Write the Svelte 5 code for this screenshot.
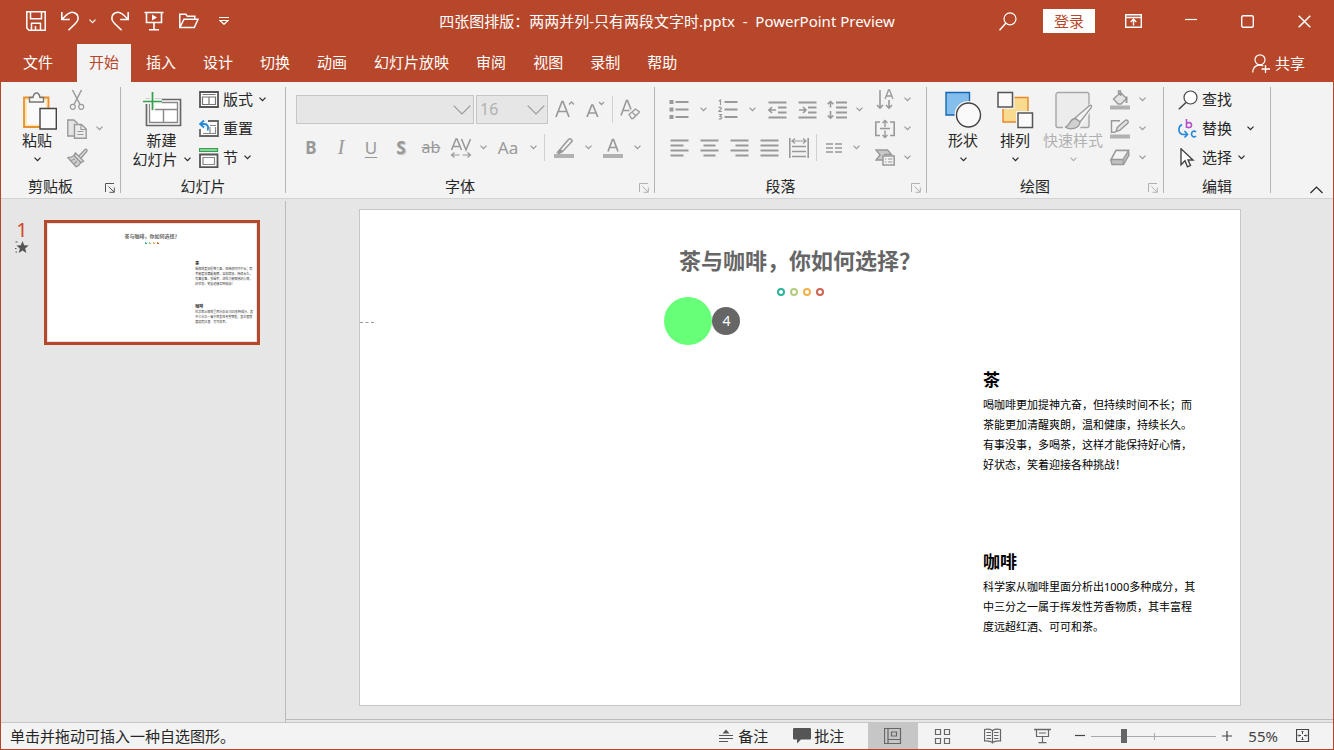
<script lang="ts">
	type Icon = { w: number; h: number; body: string };

	const icons: Record<string, Icon> = {
		chevron: { w: 7, h: 5, body: '<path d="M.5 .7 3.5 3.7 6.5 .7"/>' },
		save: { w: 20, h: 20, body: '<path d="M.8 .8h18.4v18.4H3L.8 17zM4.5 .8v7h11v-7M5.5 19.2v-7h9v7M9.5 19v-4" stroke-width="1.5"/>' },
		undo: { w: 18, h: 20, body: '<path d="M.8 1v7.5h8M1 8.300C5 4 7.500 1.200 11 1.200c3.500 0 6.200 2.600 6.200 6 0 2.500-1.500 4-3 5.500L7.500 19.300" stroke-width="1.600"/>' },
		redo: { w: 18, h: 20, body: '<path d="M17.200 1v7.500h-8M17 8.300C13 4 10.500 1.200 7 1.200c-3.500 0-6.200 2.600-6.200 6 0 2.500 1.500 4 3 5.500l6.800 6.600" stroke-width="1.600"/>' },
		present: { w: 20, h: 20, body: '<path d="M.5 1.500h19M2.500 1.500v10h15v-10M10 11.500v7M5 18.800h10" stroke-width="1.600"/><path d="m8 3.500 5 3-5 3z" fill="currentColor" stroke="none"/>' },
		folder: { w: 20, h: 16, body: '<path d="M.8 14.500V1.200h6l1.500 2h7.500v3M.8 14.500 5 6.200h14l-3.700 8.300z" stroke-width="1.500"/>' },
		customize: { w: 10, h: 8, body: '<path d="M0 .5h10M1 3.500h8L5 7.300z"/>' },
		search: { w: 18, h: 19, body: '<circle cx="11" cy="6.800" r="6"/><path d="M6.700 11.300.5 18.300" stroke-width="1.500"/>' },
		ribbonMode: { w: 17, h: 14, body: '<path d="M.7 .7h15.600v12.600H.7zM.7 3.500h15.600M8.500 11.500v-6M5.700 8l2.800-2.700L11.300 8" stroke-width="1.400"/>' },
		minimize: { w: 12, h: 12, body: '<path d="M0 4.500h12"/>' },
		maximize: { w: 13, h: 13, body: '<rect x=".7" y=".7" width="11.600" height="11.600" rx="1.500" stroke-width="1.400"/>' },
		close: { w: 13, h: 13, body: '<path d="m.7.7 11.600 11.600M12.300.7.7 12.300" stroke-width="1.500"/>' },
		share: { w: 18, h: 19, body: '<circle cx="8" cy="5.800" r="5"/><path d="M.7 18.500c0-4.500 3-7.500 7-7.500 1.500 0 2.500.2 3.500 1M13.500 11v8M9.500 15h8.500" stroke-width="1.300"/>' },
		paste: {
			w: 40, h: 40,
			body: '<path d="M7 6.500h24.500v29.500H7z" fill="#ffe9b8" stroke="#e8912d" stroke-width="1.800"/><path d="M10 9h18.500v24.500H10z" fill="#fafafa" stroke="none"/><path d="M12.500 11V6.500h3.500c.5-2.500 2-4.500 3.500-4.500s3 2 3.500 4.500h3.500V11z" fill="#f8f8f8" stroke="#797774" stroke-width="1.400"/><path d="M23 17.500h16.300v20.500H23z" fill="#fafafa" stroke="#444" stroke-width="1.400"/>'
		},
		cut: { w: 16, h: 22, body: '<path d="M3.500 1 11 15.500M12.500 1 5 15.500" stroke-width="1.500"/><circle cx="3.800" cy="17.800" r="2.500"/><circle cx="12.200" cy="17.800" r="2.500"/>' },
		copy: { w: 20, h: 20, body: '<path d="M7.500 17H.8V1h6l4 3.500" fill="#e4e4e4" stroke-width="1.400"/><path d="M7.500 5.500h7l4.700 4.500v9.200H7.500z" fill="#ececec" stroke-width="1.400"/><path d="M14 5.500v5h5M10.500 12.500h6M10.500 15.500h6"/>' },
		brush: { w: 21, h: 20, body: '<path d="M7 7.500C5 9 3 9.500.8 9.700L9 18.800c3-1 4-2.500 5-4.500z" fill="#d0d0d0" stroke-width="1.400"/><path d="m12 8 6-6.500c1-.8 2.500.5 1.800 1.800L14 10M8.500 5l8 8-2.500 1.500-7-7z" fill="#e2e2e2" stroke-width="1.400"/><path d="m4 12.500 4-1.500M7 16l3-3"/>' },
		newSlide: {
			w: 40, h: 40,
			body: '<path d="M4.500 8.500h34v26h-34z" fill="#fff" stroke="#666" stroke-width="1.700"/><path d="M7.500 11.500h28v20h-28zM7.500 18.500h28M21.500 18.500v13" stroke="#8a8886" stroke-width="1.400"/><path d="M10.500 0v20M1 10.500h19" stroke="#f3f3f3" stroke-width="5"/><path d="M10.500 1v18M1 10.500h19" stroke="#35a04b" stroke-width="1.700"/>'
		},
		layout: { w: 20, h: 17, body: '<path d="M1 1h18v15H1z" fill="#fff" stroke="#555" stroke-width="1.800"/><path d="M3.500 3.500h13M3.500 6h13v7.500h-13zM10 6v7.500" stroke="#777"/>' },
		reset: { w: 20, h: 17, body: '<path d="M1 1h18v15H1z" fill="#fff" stroke="#666" stroke-width="1.800"/><path d="M11 5.500h6M11 7v6.500H4M11 13.500h5.500V7" stroke="#888"/><path d="M0 0h9v9H0z" fill="#f3f3f3" stroke="none"/><path d="M5 .5 1 4l4 3.500M1 4h4c3.500 0 5 2.500 3.500 6.500" stroke="#2488d8" stroke-width="1.800"/>' },
		section: { w: 20, h: 20, body: '<path d="M.5 .5h18v3H.5z" fill="#8fd19e" stroke="#35a04b"/><path d="M1 6.500h17.500v12.700H1z" fill="#fff" stroke="#555" stroke-width="1.800"/><path d="M4 9.500h11.500v7H4z" stroke="#888"/>' },
		launcher: { w: 10, h: 10, body: '<path d="M9 .5H.5V9M3.500 3.500l5.500 5.500M9.300 4.500v4.800H4.500" stroke-width="1"/>' },
		comboArrow: { w: 18, h: 10, body: '<path d="m.7.700 8.300 8.300L17.300.700"/>' },
		grow: { w: 20, h: 20, body: '<path d="M1 17 7 1.500h1L14 17M3 11.500h9" stroke-width="1.700"/><path d="m14 4.500 2.500-2.500L19 4.500" stroke-width="1.300"/>' },
		shrink: { w: 20, h: 20, body: '<path d="M2 17 6.800 5h1l5 12M3.500 13h7.500" stroke-width="1.700"/><path d="M14 2 16.500 4.500 19 2" stroke-width="1.300"/>' },
		clear: { w: 20, h: 21, body: '<path d="M1 16.500 6.500 1.500h1l3.500 9M3 11.500h6.500" stroke-width="1.600"/><path d="m9 15.500 6.500-5.500 4 3-6.500 6.500h-1.500zM12 13l3.500 3.500" stroke-width="1.300"/>' },
		spacingAV: { w: 22, h: 22, body: '<path d="M1.500 13 6 2h1l4.500 11M3 9.500h7M11.500 2 16 13 20.500 2" stroke-width="1.600"/><path d="M1.500 18h8M4.500 15.500 1.500 18l3 2.500M12.500 18h8M17.500 15.500l3 2.500-3 2.500"/>' },
		highlight: { w: 20, h: 22, body: '<path d="M6 12.500 14.500 2.500c1-1 2-.8 2.800 0s1 1.800 0 2.800L8.500 14.500zM6 12.500l-2 4.500 4.500-2.500" stroke-width="1.500"/><path d="M2 16 5.500 12l3.500 3z" fill="currentColor" stroke="none"/><path d="M0 17h20v4H0z" fill="#b1b1b1" stroke="none"/>' },
		fontColor: { w: 20, h: 22, body: '<path d="M5 14.500 9.500 2.500h1L15 14.500M6.500 10.500h7" stroke-width="1.700"/><path d="M0 17h20v4H0z" fill="#b1b1b1" stroke="none"/>' },
		bullets: { w: 20, h: 20, body: '<path d="M6.500 2h13M6.500 9.500h13M6.500 17h13" stroke-width="1.800"/><path d="M.5 0h4v4h-4zM.5 7.500h4v4h-4zM.5 15h4v4h-4z" fill="currentColor" stroke="none"/>' },
		numbers: { w: 20, h: 22, body: '<path d="M6.500 3h13M6.500 10.500h13M6.500 18h13" stroke-width="1.800"/><path d="M.8 2 2.500 1v5M.7 9c1-1.300 3-1 2.500.7L.8 12.500H4M.8 15.500h2.700l-1.500 2c2.800 0 2 3-1.300 2.500"/>' },
		outdent: { w: 19, h: 18, body: '<path d="M.5 1.500h18M10 6.500h8.500M10 11.500h8.500M.5 16.500h18" stroke-width="1.800"/><path d="M1 9h7M4 6 1 9l3 3" stroke-width="1.600"/>' },
		indent: { w: 19, h: 18, body: '<path d="M.5 1.500h18M10 6.500h8.500M10 11.500h8.500M.5 16.500h18" stroke-width="1.800"/><path d="M1 9h7M5 6l3 3-3 3" stroke-width="1.600"/>' },
		lineSpacing: { w: 20, h: 20, body: '<path d="M9 2.500h11M9 7.500h11M9 12.500h11M9 17.500h11" stroke-width="1.800"/><path d="M3.500 1.500v6M.7 4.200 3.500 1.500l2.800 2.700M3.500 11v7M.7 15.500l2.800 2.700 2.800-2.700" stroke-width="1.600"/>' },
		alignLeft: { w: 19, h: 18, body: '<path d="M.5 1.500h18M.5 6.500h13M.5 11.500h18M.5 16.500h13" stroke-width="1.800"/>' },
		alignCenter: { w: 19, h: 18, body: '<path d="M.5 1.500h18M3.500 6.500h12M.5 11.500h18M3.500 16.500h12" stroke-width="1.800"/>' },
		alignRight: { w: 19, h: 18, body: '<path d="M.5 1.500h18M5.500 6.500h13M.5 11.500h18M5.500 16.500h13" stroke-width="1.800"/>' },
		justify: { w: 19, h: 18, body: '<path d="M.5 1.500h18M.5 6.500h18M.5 11.500h18M.5 16.500h18" stroke-width="1.800"/>' },
		distribute: { w: 20, h: 22, body: '<path d="M.8 1v20M19.200 1v20M3 9.500h14M3 14.500h14M3 19.500h14" stroke-width="1.600"/><path d="M3 4h14M6 1.500 3 4l3 2.500M14 1.500 17 4l-3 2.500"/>' },
		columns: { w: 16, h: 10, body: '<path d="M0 1h7M0 5h7M0 9h7M9 1h7M9 5h7M9 9h7" stroke-width="1.400"/>' },
		textDirection: { w: 19, h: 21, body: '<path d="M4 1v17M1 16l3 3 3-3M13 11v8M10 16l3 3 3-3" stroke-width="1.600"/><path d="m9 10 3.500-9h1L17 10M10.500 7h5" stroke-width="1.300"/>' },
		alignText: { w: 20, h: 20, body: '<path d="M5 3H.8v13.500H5M15 3h4.200v13.500H15" stroke-width="1.600"/><path d="M5 9.500h10M10 2v6M7.500 4 10 1.500 12.500 4M10 11.500v7M7.500 16l2.500 2.500 2.500-2.500" stroke-width="1.400"/>' },
		smartArt: { w: 20, h: 17, body: '<path d="M1 1h11.500l4 4.500H10V11H1l4-5z" fill="#c8c8c8" stroke-width="1.400"/><path d="M8 7h11.200v9H8z" fill="#f3f3f3" stroke-width="1.500"/><path d="M10 10h1.500M13 10h4.500M10 13h1.500M13 13h4.500"/>' },
		shapes: { w: 40, h: 40, body: '<path d="M3 1.500h23.500V24H3z" fill="#83beec" stroke="#1667b2" stroke-width="1.400"/><circle cx="25.500" cy="24" r="14" fill="#f3f3f3" stroke="none"/><circle cx="25.500" cy="24" r="12" fill="#fafafa" stroke="#444" stroke-width="1.400"/>' },
		arrange: { w: 40, h: 40, body: '<path d="M8 6.500h25v24.500H8z" fill="#f8db8f" stroke="#e8862a" stroke-width="1.400"/><path d="M1 0h18.500v18H1zM21 20H40v19H21z" fill="#f3f3f3" stroke="none"/><path d="M3 1.500h14.500V16H3zM23 22h14.500v14.500H23z" fill="#fafafa" stroke="#555" stroke-width="1.500"/>' },
		quickStyles: { w: 40, h: 40, body: '<path d="M5 1.500h29c1 0 2 1 2 2v31c0 1-1 2-2 2H5c-1 0-2-1-2-2v-31c0-1 1-2 2-2z" fill="#ececec" stroke="#a6a6a6" stroke-width="1.400"/><path d="M40 12 24 37H10" stroke="#f3f3f3" stroke-width="5"/><path d="m22 27 14-12c2-1.500 3.500-.5 2 2L27 31z" fill="#f3f3f3" stroke="#999" stroke-width="1.300"/><path d="M22.500 27.500c-6 0-4.500 6-10 8.500 4 3.500 14 2 14.500-5z" fill="#d0d0d0" stroke="#999" stroke-width="1.300"/>' },
		fill: { w: 20, h: 20, body: '<path d="M3.500 9 10.500 2.500l6 6-5.500 5.500H8zM10.500 6V1h-2v4" fill="#e4e4e4" stroke-width="1.400"/><path d="M16.500 6.500v6.500" stroke-width="2"/><path d="M0 15.500h20v4H0z" fill="#b1b1b1" stroke="none"/>' },
		outline: { w: 20, h: 20, body: '<path d="M10 1.700H1.500v11.500h4" stroke-width="1.400"/><path d="m6 12.500 1.300-4L15 1.500c1-.7 2-.5 2.700.3s.7 1.700 0 2.500l-8 7z" fill="#e4e4e4" stroke-width="1.400"/><path d="M0 15.500h20v4H0z" fill="#b1b1b1" stroke="none"/>' },
		effects: { w: 20, h: 17, body: '<path d="M.8 11 6 1.500h12.500L19 6l-5.500 9.500H2z" fill="#c0c0c0" stroke-width="1.400"/><path d="M6 1.500h12.500l-5.500 9H1.200z" fill="#f3f3f3" stroke-width="1.400"/><path d="m13 10.500.5 5"/>' },
		find: { w: 20, h: 20, body: '<circle cx="12.500" cy="7.500" r="6.500" fill="#fff" stroke="#444"/><path d="M8 12.500.8 19.300" stroke="#444" stroke-width="1.500"/>' },
		replace: { w: 20, h: 21, body: '<path d="M8.500 1v9M8.500 6c1-2 5-2 5 1s-4 3.500-5 1.200" stroke="#b452c8" stroke-width="1.600"/><path d="M18 14c-1.500-1.500-4.500-1-4.500 2s3 3.500 4.500 2" stroke="#2488d8" stroke-width="1.600"/><path d="M4 6.500C-.5 9 0 15.500 5 16.500h4M6.500 13l3 3.500-3 3" stroke="#2488d8" stroke-width="1.600"/>' },
		select: { w: 20, h: 20, body: '<path d="M3 .8v16l4-4 2.500 6 3-1.300-2.500-5.500H15z" fill="#fff" stroke="#444" stroke-width="1.400"/>' },
		collapse: { w: 13, h: 8, body: '<path d="M.5 7 6.500 1l6 6" stroke-width="1.200"/>' },
		star: { w: 14, h: 14, body: '<path d="m7.500 1 1.700 4.300 4.500.3-3.500 2.900 1.200 4.500-3.900-2.500L3.700 13l1.200-4.500-3.500-2.900 4.400-.3z" fill="#555" stroke="none"/><path d="M.5 2h2M0 8.500h1.500M.5 12h1.500" stroke="#555"/>' },
		notes: { w: 14, h: 14, body: '<path d="M0 6.500h14M0 9.500h14M0 12.500h9" stroke="#555"/><path d="M3.500 4.500 7 .5l3.500 4z" fill="#555" stroke="none"/>' },
		comments: { w: 18, h: 16, body: '<path d="M1.500 0h15c1 0 1.500.500 1.500 1.500V10c0 1-.500 1.500-1.500 1.500H8L4 15.500v-4H1.500C.5 11.500 0 11 0 10V1.500C0 .5.500 0 1.500 0z" fill="#555" stroke="none"/>' },
		normalView: { w: 18, h: 16, body: '<path d="M.5 .5h16v15H.5zM4 .5v15M4 11.500h12M7.500 4h5v4h-5z"/>' },
		sorterView: { w: 18, h: 16, body: '<path d="M1.500 1.500h5v5h-5zM10.500 1.500h5v5h-5zM1.500 10.500h5v5h-5zM10.500 10.500h5v5h-5z"/>' },
		readingView: { w: 19, h: 16, body: '<path d="M8.500 2.500C6 1 3 1 .5 1.500v11.500c2.500-.3 5.500-.3 8 1.500 2.500-1.800 5.500-1.800 8-1.500V1.500C14 1 11 1 8.500 2.500zM8.500 2.500v13M2.500 4.500H7M2.500 7.500H7M2.500 10.500H7M10 4.500h4.500M10 7.500h4.500M10 10.500h4.500"/>' },
		showView: { w: 19, h: 16, body: '<path d="M0 1.500h17" stroke-width="1.500"/><path d="M2.500 2v6.500h12V2M5 5h7M8.500 8.500v6M4.500 14.700h8"/>' },
		minus: { w: 10, h: 10, body: '<path d="M0 4.500h10"/>' },
		plus: { w: 10, h: 10, body: '<path d="M0 5h10M5 0v10"/>' },
		fit: { w: 14, h: 14, body: '<path d="M.5 .5h12v12H.5z"/><path d="M6.500 2.500v2.500M6.500 8v2.500M2.500 6.500H5M8 6.500h2.500M5.500 3l1-1 1 1M5.500 10l1 1 1-1M3 5.500l-1 1 1 1M10 5.500l1 1-1 1" stroke-width="1"/>' }
	};

	const tabs = ['开始', '插入', '设计', '切换', '动画', '幻灯片放映', '审阅', '视图', '录制', '帮助'];
	let activeTab = $state('开始');

	const views = [
		{ id: 'normalView', label: '普通视图' },
		{ id: 'sorterView', label: '幻灯片浏览' },
		{ id: 'readingView', label: '阅读视图' },
		{ id: 'showView', label: '幻灯片放映' }
	];
	let activeView = $state('normalView');
	let zoom = $state(25);

	const ringColors = ['#2fb39b', '#b3cb7e', '#f2b24a', '#cd6350'];

	const textBoxes = [
		{
			id: 'tea',
			heading: '茶',
			lines: [
				'喝咖啡更加提神亢奋，但持续时间不长；而',
				'茶能更加清醒爽朗，温和健康，持续长久。',
				'有事没事，多喝茶，这样才能保持好心情，',
				'好状态，笑着迎接各种挑战！'
			]
		},
		{
			id: 'coffee',
			heading: '咖啡',
			lines: ['科学家从咖啡里面分析出1000多种成分，其', '中三分之一属于挥发性芳香物质，其丰富程', '度远超红酒、可可和茶。']
		}
	];
</script>

<svelte:head>
	<title>四张图排版：两两并列-只有两段文字时.pptx - PowerPoint Preview</title>
</svelte:head>

{#snippet icon(name: string)}
	<svg
		width={icons[name].w}
		height={icons[name].h}
		viewBox="0 0 {icons[name].w} {icons[name].h}"
		fill="none"
		stroke="currentColor"
		stroke-width="1.2"
		aria-hidden="true"
	>
		{@html icons[name].body}
	</svg>
{/snippet}

{#snippet tool(name: string, label: string, disabled = true)}
	<button class="tool" aria-label={label} {disabled}>{@render icon(name)}</button>
{/snippet}

{#snippet drop(label: string, disabled = true, tight = false)}
	<button class="drop" class:tight aria-label={label} {disabled}>{@render icon('chevron')}</button>
{/snippet}

{#snippet groupLabel(label: string, launcher = true, launcherOff = true)}
	<div class="group-label">
		<span>{label}</span>
		{#if launcher}
			<button class="launcher" aria-label="{label}设置" disabled={launcherOff}>{@render icon('launcher')}</button>
		{/if}
	</div>
{/snippet}

{#snippet slideContent()}
	<h2 class="slide-title">茶与咖啡，你如何选择？</h2>
	<div class="rings">
		{#each ringColors as color}
			<span style="border-color: {color}"></span>
		{/each}
	</div>
	{#each textBoxes as box}
		<div class="text-box {box.id}">
			<h3>{box.heading}</h3>
			{#each box.lines as line}
				<p>{line}</p>
			{/each}
		</div>
	{/each}
{/snippet}

<div class="window">
	<header class="titlebar">
		<div class="quick">
			<button aria-label="保存">{@render icon('save')}</button>
			<span class="split">
				<button aria-label="撤消">{@render icon('undo')}</button>
				<button aria-label="撤消列表">{@render icon('chevron')}</button>
			</span>
			<button aria-label="恢复">{@render icon('redo')}</button>
			<button aria-label="从头开始放映">{@render icon('present')}</button>
			<button aria-label="打开">{@render icon('folder')}</button>
			<button class="customize" aria-label="自定义快速访问工具栏">{@render icon('customize')}</button>
		</div>
		<h1>四张图排版：两两并列-只有两段文字时.pptx&nbsp; -&nbsp; PowerPoint Preview</h1>
		<div class="window-controls">
			<button class="find" aria-label="搜索">{@render icon('search')}</button>
			<button class="login">登录</button>
			<button aria-label="功能区显示选项">{@render icon('ribbonMode')}</button>
			<button aria-label="最小化">{@render icon('minimize')}</button>
			<button aria-label="最大化">{@render icon('maximize')}</button>
			<button aria-label="关闭">{@render icon('close')}</button>
		</div>
	</header>

	<nav class="tabs">
		<button class="file">文件</button>
		{#each tabs as tab}
			<button class:active={activeTab === tab} onclick={() => (activeTab = tab)}>{tab}</button>
		{/each}
		<button class="share">{@render icon('share')}共享</button>
	</nav>

	<div class="ribbon">
		<section class="group clipboard">
			<div class="group-body">
				<button class="large paste">{@render icon('paste')}<span>粘贴</span><span>{@render icon('chevron')}</span></button>
				<div class="stack">
					<div class="row">{@render tool('cut', '剪切')}</div>
					<div class="row">{@render tool('copy', '复制')}{@render drop('复制选项', true, true)}</div>
					<div class="row">{@render tool('brush', '格式刷')}</div>
				</div>
			</div>
			{@render groupLabel('剪贴板', true, false)}
		</section>

		<section class="group slides">
			<div class="group-body">
				<button class="large new-slide">
					{@render icon('newSlide')}<span>新建</span><span class="with-arrow">幻灯片{@render icon('chevron')}</span>
				</button>
				<div class="stack">
					<button class="small">{@render icon('layout')}版式{@render icon('chevron')}</button>
					<button class="small">{@render icon('reset')}重置</button>
					<button class="small">{@render icon('section')}节{@render icon('chevron')}</button>
				</div>
			</div>
			{@render groupLabel('幻灯片', false)}
		</section>

		<section class="group font">
			<div class="group-body lines">
				<div class="row">
					<label class="combo family">
						<select aria-label="字体" disabled><option></option></select>
						{@render icon('comboArrow')}
					</label>
					<label class="combo size">
						<select aria-label="字号" disabled><option>16</option></select>
						{@render icon('comboArrow')}
					</label>
					{@render tool('grow', '增大字号')}
					{@render tool('shrink', '减小字号')}
					<i class="divider"></i>
					{@render tool('clear', '清除所有格式')}
				</div>
				<div class="row">
					<button class="tool bold" disabled>B</button>
					<button class="tool italic" disabled>I</button>
					<button class="tool underline" disabled>U</button>
					<button class="tool shadow" disabled>S</button>
					<button class="tool strike" disabled>ab</button>
					{@render tool('spacingAV', '字符间距')}{@render drop('间距选项', true, true)}
					<button class="tool case" disabled>Aa</button>{@render drop('大小写选项', true, true)}
					<i class="divider wide"></i>
					{@render tool('highlight', '突出显示')}{@render drop('突出显示颜色')}
					{@render tool('fontColor', '字体颜色')}{@render drop('颜色选项')}
				</div>
			</div>
			{@render groupLabel('字体')}
		</section>

		<section class="group paragraph">
			<div class="group-body">
				<div class="lines">
					<div class="row">
						{@render tool('bullets', '项目符号')}{@render drop('项目符号库')}
						{@render tool('numbers', '编号')}{@render drop('编号库')}
						{@render tool('outdent', '减少缩进')}
						{@render tool('indent', '增加缩进')}
						{@render tool('lineSpacing', '行距')}{@render drop('行距选项', true, true)}
					</div>
					<div class="row">
						{@render tool('alignLeft', '左对齐')}
						{@render tool('alignCenter', '居中')}
						{@render tool('alignRight', '右对齐')}
						{@render tool('justify', '两端对齐')}
						{@render tool('distribute', '分散对齐')}
						<i class="divider"></i>
						{@render tool('columns', '分栏')}{@render drop('分栏选项', true, true)}
					</div>
				</div>
				<div class="stack">
					<div class="row">{@render tool('textDirection', '文字方向')}{@render drop('文字方向选项', true, true)}</div>
					<div class="row">{@render tool('alignText', '对齐文本')}{@render drop('对齐文本选项', true, true)}</div>
					<div class="row">{@render tool('smartArt', '转换为 SmartArt')}{@render drop('SmartArt 选项', true, true)}</div>
				</div>
			</div>
			{@render groupLabel('段落')}
		</section>

		<section class="group drawing">
			<div class="group-body">
				<button class="large">{@render icon('shapes')}<span>形状</span><span>{@render icon('chevron')}</span></button>
				<button class="large">{@render icon('arrange')}<span>排列</span><span>{@render icon('chevron')}</span></button>
				<button class="large quick-styles" disabled>
					{@render icon('quickStyles')}<span>快速样式</span><span>{@render icon('chevron')}</span>
				</button>
				<div class="stack">
					<div class="row">{@render tool('fill', '形状填充')}{@render drop('填充颜色', true, true)}</div>
					<div class="row">{@render tool('outline', '形状轮廓')}{@render drop('轮廓颜色', true, true)}</div>
					<div class="row">{@render tool('effects', '形状效果')}{@render drop('效果选项', true, true)}</div>
				</div>
			</div>
			{@render groupLabel('绘图')}
		</section>

		<section class="group editing">
			<div class="group-body">
				<div class="stack">
					<button class="small">{@render icon('find')}查找</button>
					<button class="small replace">{@render icon('replace')}替换{@render icon('chevron')}</button>
					<button class="small">{@render icon('select')}选择{@render icon('chevron')}</button>
				</div>
			</div>
			{@render groupLabel('编辑', false)}
		</section>

		<button class="collapse" aria-label="折叠功能区">{@render icon('collapse')}</button>
	</div>

	<main class="workspace">
		<aside class="thumbnails">
			<div class="marker">
				<span>1</span>
				{@render icon('star')}
			</div>
			<div class="thumb">
				<div class="slide mini">{@render slideContent()}</div>
			</div>
		</aside>
		<section class="editor">
			<div class="slide">
				{@render slideContent()}
				<i class="guide"></i>
				<div class="click-marker">
					<span class="spot"></span>
					<span class="badge">4</span>
				</div>
			</div>
		</section>
	</main>

	<footer class="status">
		<span class="hint">单击并拖动可插入一种自选图形。</span>
		<button class="notes">{@render icon('notes')}备注</button>
		<button class="comments">{@render icon('comments')}批注</button>
		<div class="views">
			{#each views as view}
				<button aria-label={view.label} class:active={activeView === view.id} onclick={() => (activeView = view.id)}>
					{@render icon(view.id)}
				</button>
			{/each}
		</div>
		<div class="zoom">
			<button aria-label="缩小" onclick={() => (zoom -= 5)}>{@render icon('minus')}</button>
			<span class="slider"><input type="range" aria-label="缩放" min="0" max="100" bind:value={zoom} /></span>
			<button aria-label="放大" onclick={() => (zoom += 5)}>{@render icon('plus')}</button>
			<button class="percent">55%</button>
			<button aria-label="使幻灯片适应当前窗口">{@render icon('fit')}</button>
		</div>
	</footer>
</div>

<style>
	:global(body) {
		margin: 0;
	}

	.window {
		--accent: #b7472a;
		--panel: #f3f3f3;
		--canvas: #e6e6e6;
		--line: #c6c6c6;
		display: flex;
		flex-direction: column;
		box-sizing: border-box;
		height: 100vh;
		border: solid var(--accent);
		border-width: 0 1px 1px;
		background: var(--canvas);
		color: #262626;
		font: 15px/19px 'Noto Sans', 'Noto Sans CJK SC', sans-serif;
		overflow: hidden;
	}

	button {
		display: inline-flex;
		align-items: center;
		justify-content: center;
		flex: none;
		margin: 0;
		border: 0;
		padding: 0;
		background: none;
		color: inherit;
		font: inherit;
		white-space: nowrap;
	}

	button:disabled {
		color: #999;
	}

	svg {
		flex: none;
		display: block;
	}

	.titlebar {
		display: grid;
		grid-template-columns: 1fr auto 1fr;
		align-items: center;
		height: 42px;
		background: var(--accent);
		color: #fff;
	}

	.titlebar h1 {
		margin: 0;
		font-size: 15px;
		font-weight: 400;
	}

	.quick {
		display: flex;
		align-items: center;
		gap: 15px;
		padding-left: 25px;
	}

	.split {
		display: flex;
		gap: 10px;
	}

	.customize {
		margin-left: 5px;
	}

	.window-controls {
		display: flex;
		align-items: center;
		justify-content: flex-end;
	}

	.window-controls button {
		width: 57px;
		height: 24px;
	}

	.window-controls .find {
		width: 26px;
		margin-right: 22px;
	}

	.window-controls .login {
		width: 52px;
		margin-right: 10px;
		background: #fff;
		color: var(--accent);
	}

	.tabs {
		display: flex;
		gap: 3px;
		height: 38px;
		padding: 2px 28px 0 10px;
		background: var(--accent);
		color: #fff;
	}

	.tabs button {
		padding: 0 12px 2px;
	}

	.tabs .file {
		margin-right: 9px;
	}

	.tabs .active {
		background: var(--panel);
		color: var(--accent);
	}

	.tabs .share {
		gap: 5px;
		margin-left: auto;
		padding: 0;
	}

	.ribbon {
		display: flex;
		flex: none;
		height: 116px;
		border-bottom: 1px solid #d2d2d2;
		background: var(--panel);
	}

	.group {
		position: relative;
		display: flex;
		flex-direction: column;
		flex: none;
		box-sizing: border-box;
		padding-top: 3px;
	}

	.group::after {
		content: '';
		position: absolute;
		inset: 5px 0 5px auto;
		width: 1px;
		background: #b4b4b4;
	}

	.group-body {
		display: flex;
		height: 87px;
	}

	.clipboard {
		width: 120px;
		padding-left: 16px;
	}

	.slides {
		width: 165px;
		padding-left: 8px;
	}

	.font {
		width: 369px;
		padding-left: 10px;
	}

	.paragraph {
		width: 272px;
		padding-left: 9px;
	}

	.paragraph .stack {
		margin-left: 4px;
	}

	.drawing {
		width: 237px;
		padding-left: 10px;
	}

	.editing {
		width: 107px;
		padding-left: 14px;
	}

	.group-label {
		position: absolute;
		inset: auto 1px 2px 0;
		display: flex;
		height: 20px;
		align-items: center;
		text-align: center;
	}

	.group-label span {
		flex: 1;
	}

	.launcher {
		width: 20px;
		height: 16px;
		align-self: flex-end;
		color: #555;
	}

	.launcher:disabled {
		color: #b1b1b1;
	}

	.large {
		flex-direction: column;
		justify-content: flex-start;
		width: 52px;
		padding-top: 6px;
	}

	.large span {
		display: flex;
		align-items: center;
		justify-content: center;
		height: 19px;
	}

	.large .with-arrow {
		gap: 6px;
	}

	.paste {
		width: 40px;
		margin-right: 5px;
	}

	.new-slide {
		width: 65px;
		margin-right: 5px;
	}

	.quick-styles {
		width: 64px;
	}

	.large:disabled {
		color: #b1b1b1;
	}

	.stack {
		display: flex;
		flex-direction: column;
	}

	.stack > * {
		height: 29px;
	}

	.row {
		display: flex;
		align-items: center;
	}

	.small {
		justify-content: flex-start;
		gap: 4px;
	}

	.small svg:last-child:not(:first-child) {
		margin-left: 2px;
	}

	.replace svg:last-child:not(:first-child) {
		margin-left: 11px;
	}

	.lines {
		display: flex;
		flex-direction: column;
		box-sizing: border-box;
		gap: 9px;
		padding-top: 10px;
	}

	.lines .row {
		height: 29px;
	}

	.tool {
		width: 30px;
		height: 29px;
	}

	.drop {
		width: 19px;
		height: 29px;
	}

	.drop.tight {
		width: 14px;
	}

	.divider {
		width: 1px;
		height: 27px;
		margin: 0 2px;
		background: #d0d0d0;
	}

	.divider.wide {
		margin: 0 4px;
	}

	.combo {
		position: relative;
		margin-right: 2px;
	}

	.combo select {
		box-sizing: border-box;
		width: 100%;
		height: 29px;
		border: 1px solid var(--line);
		border-radius: 0;
		padding: 0 3px;
		appearance: none;
		background: var(--canvas);
		color: #b1b1b1;
		font: inherit;
		font-size: 16px;
		opacity: 1;
	}

	.combo svg {
		position: absolute;
		top: 10px;
		right: 3px;
		color: #999;
		pointer-events: none;
	}

	.family {
		width: 178px;
	}

	.size {
		width: 72px;
	}

	.bold,
	.italic,
	.underline,
	.shadow,
	.strike,
	.case {
		font-size: 17px;
	}

	.bold,
	.shadow {
		font-weight: 700;
	}

	.italic {
		font-family: 'Liberation Serif', serif;
		font-style: italic;
		font-size: 20px;
	}

	.underline {
		text-decoration: underline;
		text-underline-offset: 3px;
	}

	.shadow {
		text-shadow: 1px 1px 1px #bbb;
	}

	.strike {
		font-size: 16px;
		text-decoration: line-through;
	}

	.tool.case {
		width: 36px;
	}

	.collapse {
		align-self: flex-end;
		width: 33px;
		height: 17px;
		margin-left: auto;
	}

	.workspace {
		display: flex;
		flex: 1;
		min-height: 0;
	}

	.thumbnails {
		display: flex;
		flex: none;
		align-items: flex-start;
		box-sizing: border-box;
		width: 285px;
		margin-top: 2px;
		padding: 19px 25px 0 12px;
		border-right: 1px solid #bbb;
	}

	.marker {
		display: flex;
		flex-direction: column;
		align-items: center;
		gap: 1px;
		width: 18px;
		margin-right: 13px;
		color: #d24726;
		font-size: 20px;
	}

	.thumb {
		flex: 1;
		border: 3px solid var(--accent);
		padding: 1px;
	}

	.editor {
		flex: 1;
		margin-bottom: 2px;
		padding: 10px 92px 0 73px;
		border-bottom: 1px solid #bbb;
	}

	.slide {
		position: relative;
		aspect-ratio: 16 / 9;
		border: 1px solid var(--line);
		background: #fff;
		color: #000;
		font-size: 11px;
		line-height: 20px;
		white-space: nowrap;
	}

	.slide-title {
		position: absolute;
		top: 7%;
		left: 0;
		width: 100%;
		margin: 0;
		color: #666;
		font-size: 22px;
		line-height: 30px;
		text-align: center;
	}

	.rings {
		position: absolute;
		top: 15.7%;
		left: 0;
		display: flex;
		justify-content: center;
		gap: 5px;
		width: 100%;
	}

	.rings span {
		width: 4px;
		height: 4px;
		border: 2px solid;
		border-radius: 50%;
	}

	.text-box {
		position: absolute;
		left: 70.8%;
	}

	.tea {
		top: 32%;
	}

	.coffee {
		top: 68.7%;
	}

	.text-box h3 {
		margin: 0 0 3px;
		font-size: 17px;
		line-height: 24px;
	}

	.text-box p {
		margin: 0;
	}

	.mini {
		border: 0;
		color: #333;
		font-size: 3px;
		line-height: 5px;
	}

	.mini .slide-title {
		font-size: 5px;
		line-height: 8px;
	}

	.mini .rings {
		gap: 2px;
	}

	.mini .rings span {
		width: 1px;
		height: 1px;
		border-width: 0 0 1px 1px;
		border-radius: 0;
	}

	.mini .text-box h3 {
		margin-bottom: 1px;
		font-size: 4px;
		line-height: 5px;
	}

	.guide {
		position: absolute;
		top: 22.6%;
		left: 0;
		width: 14px;
		border-top: 1px dashed #999;
	}

	.click-marker {
		position: absolute;
		top: 17.6%;
		left: 34.6%;
		display: flex;
		align-items: center;
	}

	.spot {
		width: 48px;
		height: 48px;
		border-radius: 50%;
		background: #6f7;
	}

	.badge {
		width: 28px;
		height: 28px;
		border-radius: 50%;
		background: #666;
		color: #fff;
		font-size: 14px;
		line-height: 28px;
		text-align: center;
	}

	.status {
		display: flex;
		flex: none;
		align-items: stretch;
		height: 26px;
		border-top: 1px solid var(--line);
		background: var(--panel);
	}

	.hint {
		align-self: center;
		margin-right: auto;
		padding-left: 9px;
	}

	.notes {
		gap: 5px;
		margin-right: 25px;
	}

	.comments {
		gap: 3px;
		margin-right: 24px;
	}

	.views {
		display: flex;
		color: #666;
	}

	.views button {
		width: 50px;
	}

	.views .active {
		background: #c6c6c6;
	}

	.zoom {
		display: flex;
		align-items: center;
		gap: 6px;
		padding: 0 23px 0 7px;
		color: #444;
	}

	.slider {
		position: relative;
		display: flex;
		width: 125px;
	}

	.slider::before {
		content: '';
		position: absolute;
		top: 4px;
		left: 50%;
		width: 1px;
		height: 7px;
		background: #aaa;
	}

	.slider input {
		position: relative;
		width: 100%;
		height: 14px;
		margin: 0;
		appearance: none;
		background: linear-gradient(#aaa, #aaa) center / 100% 1px no-repeat;
	}

	.slider input::-webkit-slider-thumb {
		width: 6px;
		height: 14px;
		appearance: none;
		background: #666;
	}

	.percent {
		margin: 0 12px 0 10px;
	}
</style>
